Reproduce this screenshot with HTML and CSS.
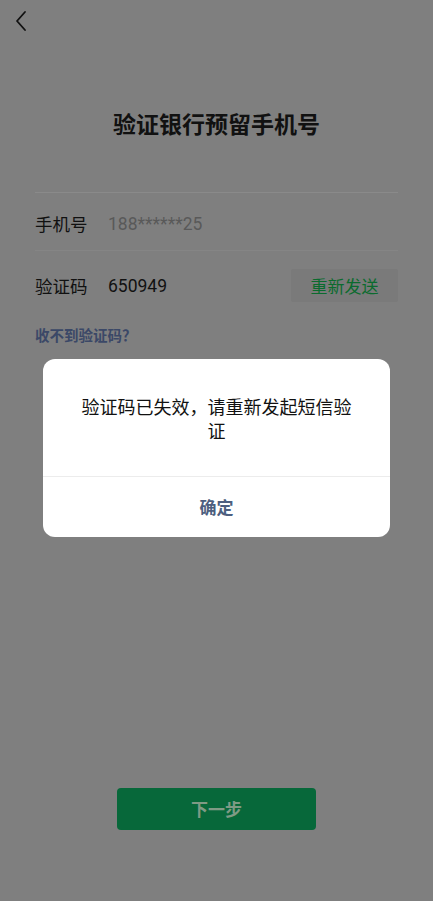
FILE: index.html
```html
<!DOCTYPE html>
<html lang="zh-CN">
<head>
  <meta charset="UTF-8">
  <meta name="viewport" content="width=device-width, initial-scale=1.0">
  <title>验证银行预留手机号</title>
  <link rel="stylesheet" href="styles.css">
</head>
<body>
  <div class="page">
    <div class="nav">
      <svg class="back" width="14" height="22" viewBox="0 0 14 22">
        <path d="M11 2 L3 11 L11 20" fill="none" stroke="#111" stroke-width="1.8" stroke-linecap="round" stroke-linejoin="round"/>
      </svg>
    </div>
    <h1 class="title">验证银行预留手机号</h1>
    <div class="form">
      <div class="row">
        <span class="label">手机号</span>
        <span class="value muted">188******25</span>
      </div>
      <div class="row">
        <span class="label">验证码</span>
        <span class="value">650949</span>
        <span class="resend">重新发送</span>
      </div>
    </div>
    <div class="help">收不到验证码？</div>
    <div class="spacer"></div>
    <div class="next">下一步</div>
  </div>

  <div class="dialog">
    <div class="dialog-body">验证码已失效，请重新发起短信验证</div>
    <div class="dialog-btn">确定</div>
  </div>
</body>
</html>
```

FILE: styles.css
```css
html, body {
  margin: 0;
  height: 100%;
}
body {
  background-color: #7f7f7f;
  font-family: "Noto Sans CJK SC", "Noto Sans", sans-serif;
  color: #111;
}
.page {
  display: flex;
  flex-direction: column;
  height: 901px;
  box-sizing: border-box;
  padding: 0 35px;
}
.nav {
  height: 44px;
  margin-left: -21px;
  padding-top: 10px;
  box-sizing: border-box;
}
.back {
  display: block;
}
.title {
  margin: 62px 0 0;
  text-align: center;
  font-size: 23px;
  line-height: 34px;
  font-weight: bold;
  color: #111;
}
.form {
  margin-top: 52px;
  border-top: 1px solid #8a8a8a;
}
.row {
  display: flex;
  align-items: center;
  height: 57px;
  padding-top: 4px;
  box-sizing: border-box;
  font-size: 17.5px;
}
.row + .row {
  border-top: 1px solid #858585;
  height: 70px;
  padding-top: 0;
}
.label {
  width: 73px;
}
.value {
  flex: 1;
  font-family: "Roboto", "Noto Sans", sans-serif;
  font-size: 17.5px;
}
.muted {
  color: #595959;
}
.resend {
  width: 107px;
  height: 33px;
  line-height: 33px;
  text-align: center;
  background-color: #7a7a7a;
  color: #0b6b2e;
  border-radius: 2px;
  font-size: 17px;
}
.help {
  margin-top: 4px;
  font-size: 14.5px;
  font-weight: bold;
  color: #3b4867;
}
.spacer {
  flex: 1;
}
.next {
  align-self: center;
  width: 199px;
  height: 42px;
  line-height: 42px;
  margin-bottom: 71px;
  text-align: center;
  background-color: #07683a;
  color: #7f9a85;
  font-size: 17px;
  font-weight: bold;
  border-radius: 4px;
}
.dialog {
  position: absolute;
  top: 359px;
  left: 43px;
  width: 347px;
  background-color: #fff;
  border-radius: 12px;
  overflow: hidden;
}
.dialog-body {
  padding: 35px 34px 34px;
  text-align: center;
  font-size: 18px;
  line-height: 24px;
  color: #111;
  border-bottom: 1px solid #ececec;
}
.dialog-btn {
  height: 60px;
  line-height: 60px;
  text-align: center;
  font-size: 17px;
  font-weight: bold;
  color: #4d5f80;
}
```
